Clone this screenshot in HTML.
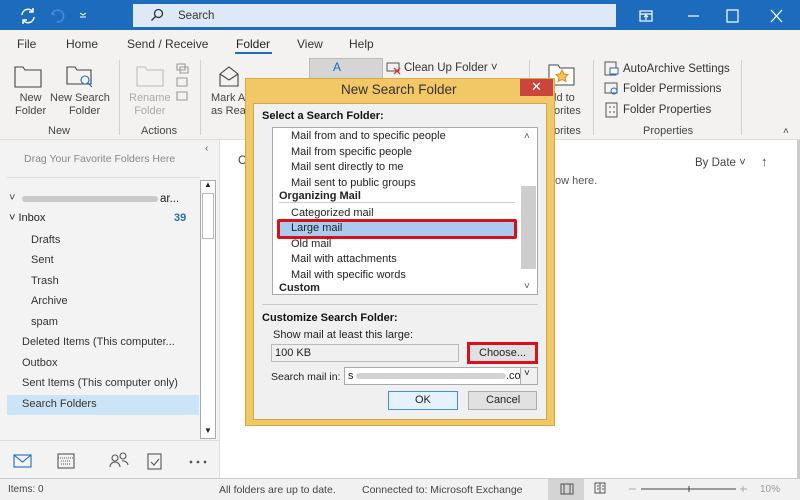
<!DOCTYPE html>
<html><head><meta charset="utf-8"><style>
*{margin:0;padding:0;box-sizing:border-box}
body{width:800px;height:500px;overflow:hidden;position:relative;font-family:"Liberation Sans","DejaVu Sans",sans-serif;font-size:11px;color:#222;background:#fff}
.a{position:absolute}
.t{position:absolute;white-space:nowrap}
</style></head><body>
<!-- title bar -->
<div class="a" style="left:0;top:0;width:800px;height:30px;background:#1c6bbd"></div>
<div class="a" style="left:133px;top:4px;width:483px;height:23px;background:#dde9f6"></div>
<svg class="a" style="left:18px;top:6px" width="20" height="20" viewBox="0 0 20 20" fill="none" stroke="#fff" stroke-width="1.5"><path d="M4 9a6 6 0 0 1 11-3M16 11a6 6 0 0 1-11 3"/><path d="M15 2v4h-4M5 18v-4h4"/></svg>
<svg class="a" style="left:50px;top:7px" width="16" height="16" viewBox="0 0 16 16" fill="none" stroke="#4f8fd8" stroke-width="1.4"><path d="M4 4l-2 3 3 1M2 7a6 6 0 1 1 5 8"/></svg>
<svg class="a" style="left:78px;top:10px" width="10" height="10" fill="none" stroke="#fff"><path d="M2 3l3 2 3-2M2 7h6"/></svg>
<svg class="a" style="left:150px;top:8px" width="14" height="14" viewBox="0 0 14 14" fill="none" stroke="#333" stroke-width="1.3"><circle cx="8.5" cy="5.5" r="4"/><path d="M5.5 8.5L1.5 12.5"/></svg>
<div class="t" style="left:178px;top:10px;font-size:11.5px;color:#333">Search</div>
<svg class="a" style="left:638px;top:8px" width="150" height="16" viewBox="0 0 150 16" fill="none" stroke="#fff" stroke-width="1.2"><rect x="2" y="3" width="12" height="10"/><path d="M2 6h12M8 12V7M6 9l2-2 2 2"/><path d="M50 8h11"/><rect x="89" y="2" width="11" height="12"/><path d="M133 2l11 12M144 2l-11 12"/></svg>
<!-- tabs -->
<div class="a" style="left:0;top:30px;width:800px;height:110px;background:#f3f2f1"></div>
<div class="t" style="left:17px;top:37px;font-size:12px;color:#333">File</div>
<div class="t" style="left:66px;top:37px;font-size:12px;color:#333">Home</div>
<div class="t" style="left:127px;top:37px;font-size:12px;color:#333">Send / Receive</div>
<div class="t" style="left:236px;top:37px;font-size:12px;color:#222">Folder</div>
<div class="a" style="left:235px;top:52px;width:37px;height:2px;background:#1c6bbd"></div>
<div class="t" style="left:297px;top:37px;font-size:12px;color:#333">View</div>
<div class="t" style="left:349px;top:37px;font-size:12px;color:#333">Help</div>
<!-- ribbon -->
<svg class="a" style="left:12px;top:62px" width="230" height="40" viewBox="0 0 230 40" fill="none" stroke="#444" stroke-width="1.1"><path d="M3 5h8l2 3h16v17H3z"/><path d="M55 5h8l2 3h14v14H55z"/><circle cx="73" cy="18" r="4" stroke="#1c6bbd"/><path d="M76 21l4 4" stroke="#1c6bbd"/><path d="M125 5h8l2 3h16v16h-26z" stroke="#bbb"/><path d="M165 2h8v6h-8zM168 5h8v6h-8zM165 16h10v8h-10zM165 30h10v8h-10z" stroke="#999"/><path d="M208 12l9-7 9 7v12h-18z"/><path d="M208 12l9 6 9-6"/></svg>
<div class="t" style="left:15px;top:92px;text-align:center;line-height:13px;color:#444;font-size:11px">New<br>Folder</div>
<div class="t" style="left:50px;top:92px;text-align:center;line-height:13px;color:#444;font-size:11px">New Search<br>&nbsp;&nbsp;&nbsp;Folder</div>
<div class="t" style="left:129px;top:92px;text-align:center;line-height:13px;color:#aaa;font-size:11px">Rename<br>Folder</div>
<div class="t" style="left:211px;top:92px;line-height:13px;color:#444;font-size:11px">Mark A<br>as Rea</div>
<div class="t" style="left:48px;top:125px;color:#444;font-size:11px">New</div>
<div class="t" style="left:141px;top:125px;color:#444;font-size:11px">Actions</div>
<div class="a" style="left:119px;top:60px;width:1px;height:75px;background:#d0d0d0"></div>
<div class="a" style="left:200px;top:60px;width:1px;height:75px;background:#d0d0d0"></div>
<div class="a" style="left:309px;top:58px;width:74px;height:22px;background:#d5d5d5;border:1px solid #bbb"></div>
<div class="t" style="left:333px;top:60px;color:#1c6bbd;font-size:12px">A</div>
<svg class="a" style="left:386px;top:61px" width="16" height="14"><rect x="1" y="2" width="12" height="8" fill="none" stroke="#555"/><path d="M8 7l6 6M14 7l-6 6" stroke="#d33" stroke-width="1.3"/></svg>
<div class="t" style="left:404px;top:62px;color:#333;font-size:11.5px">Clean Up Folder ˅</div>
<div class="a" style="left:529px;top:60px;width:1px;height:75px;background:#d0d0d0"></div>
<svg class="a" style="left:548px;top:64px" width="28" height="22"><path d="M1 1h9l2 3h14v17H1z" fill="#fff" stroke="#444"/><path d="M14 6l2 4 4 .5-3 3 1 4-4-2-4 2 1-4-3-3 4-.5z" fill="#f7c45b" stroke="#e08b1e"/></svg>
<div class="t" style="left:554px;top:92px;line-height:13px;color:#444;font-size:11px">ld to<br>orites</div>
<div class="t" style="left:554px;top:125px;color:#444;font-size:11px">orites</div>
<div class="a" style="left:593px;top:60px;width:1px;height:75px;background:#d0d0d0"></div>
<svg class="a" style="left:604px;top:61px" width="16" height="60" fill="none" stroke="#555"><rect x="1" y="1" width="11" height="13"/><rect x="6" y="7" width="8" height="6" stroke="#1c6bbd" fill="#fff"/><rect x="1" y="22" width="12" height="10"/><circle cx="10" cy="30" r="3" stroke="#1c6bbd"/><rect x="2" y="42" width="11" height="14"/><path d="M5 46h2M5 51h2M9 46h2M9 51h2"/></svg>
<div class="t" style="left:623px;top:63px;color:#333;font-size:11.5px">AutoArchive Settings</div>
<div class="t" style="left:623px;top:83px;color:#333;font-size:11.5px">Folder Permissions</div>
<div class="t" style="left:623px;top:104px;color:#333;font-size:11.5px">Folder Properties</div>
<div class="t" style="left:643px;top:125px;color:#444;font-size:11px">Properties</div>
<div class="a" style="left:741px;top:60px;width:1px;height:75px;background:#d0d0d0"></div>
<div class="t" style="left:783px;top:126px;color:#444;font-size:10px">˄</div>
<div class="a" style="left:0;top:139px;width:800px;height:1px;background:#dadada"></div>
<!-- left pane -->
<div class="a" style="left:0;top:140px;width:220px;height:338px;background:#f3f3f3;border-right:1px solid #ddd"></div>
<div class="t" style="left:205px;top:143px;color:#555;font-size:10px">‹</div>
<div class="t" style="left:24px;top:153px;color:#888;font-size:10.5px">Drag Your Favorite Folders Here</div>
<div class="a" style="left:7px;top:177px;width:193px;height:1px;background:#ddd"></div>
<div class="a" style="left:200px;top:180px;width:16px;height:259px;background:#fff;border:1px solid #aaa"></div>
<div class="a" style="left:202px;top:193px;width:12px;height:46px;background:#fff;border:1px solid #bbb"></div>
<div class="t" style="left:204px;top:180px;font-size:8px">▲</div>
<div class="t" style="left:204px;top:426px;font-size:8px">▼</div>
<div class="t" style="left:9px;top:192px;color:#444">˅</div>
<div class="a" style="left:22px;top:196px;width:136px;height:6px;background:#c9c9c9;border-radius:3px"></div>
<div class="t" style="left:160px;top:193px;font-size:11.5px">ar...</div>
<div class="t" style="left:9px;top:212px;font-size:11px">˅ Inbox</div>
<div class="t" style="left:174px;top:212px;font-size:11px;color:#2a6cb0;font-weight:bold">39</div>
<div class="t" style="left:31px;top:234px;font-size:11px;color:#333">Drafts</div>
<div class="t" style="left:31px;top:254px;font-size:11px;color:#333">Sent</div>
<div class="t" style="left:31px;top:275px;font-size:11px;color:#333">Trash</div>
<div class="t" style="left:31px;top:295px;font-size:11px;color:#333">Archive</div>
<div class="t" style="left:31px;top:316px;font-size:11px;color:#333">spam</div>
<div class="t" style="left:22px;top:336px;font-size:11px;color:#333">Deleted Items (This computer...</div>
<div class="t" style="left:22px;top:357px;font-size:11px;color:#333">Outbox</div>
<div class="t" style="left:22px;top:377px;font-size:11px;color:#333">Sent Items (This computer only)</div>
<div class="a" style="left:7px;top:395px;width:192px;height:20px;background:#cce4f7"></div>
<div class="t" style="left:22px;top:398px;font-size:11px;color:#333">Search Folders</div>
<div class="a" style="left:0;top:440px;width:219px;height:1px;background:#ddd"></div>
<svg class="a" style="left:12px;top:450px" width="200" height="22" fill="none" stroke="#555" stroke-width="1.1"><rect x="2" y="5" width="17" height="12" stroke="#1c6bbd"/><path d="M2 5l8.5 7 8.5-7" stroke="#1c6bbd"/><rect x="46" y="4" width="16" height="14"/><path d="M46 8h16M49 11h10M49 14h10" stroke-dasharray="1 1"/><circle cx="103" cy="8" r="3"/><path d="M98 17a5 5 0 0 1 10 0"/><circle cx="111" cy="6" r="3"/><path d="M110 11a5 5 0 0 1 6 4"/><rect x="136" y="4" width="13" height="15"/><path d="M139 12l3 3 5-6"/><circle cx="179" cy="12" r=".8" fill="#555"/><circle cx="186" cy="12" r=".8" fill="#555"/><circle cx="193" cy="12" r=".8" fill="#555"/></svg>
<!-- content -->
<div class="t" style="left:238px;top:153px;color:#444;font-size:12px">C</div>
<div class="t" style="left:695px;top:157px;color:#444;font-size:11.5px">By Date ˅</div>
<div class="t" style="left:761px;top:154px;color:#444;font-size:13px">↑</div>
<div class="t" style="left:555px;top:175px;color:#555;font-size:11px">ow here.</div>
<div class="a" style="left:797px;top:140px;width:3px;height:340px;background:#ccc"></div>
<!-- status bar -->
<div class="a" style="left:0;top:478px;width:800px;height:22px;background:#f1f1f1;border-top:1px solid #ccc"></div>
<div class="t" style="left:8px;top:484px;color:#444;font-size:10px">Items: 0</div>
<div class="t" style="left:219px;top:484px;color:#444;font-size:10.5px">All folders are up to date.</div>
<div class="t" style="left:362px;top:484px;color:#444;font-size:10.5px">Connected to: Microsoft Exchange</div>
<div class="a" style="left:548px;top:479px;width:36px;height:21px;background:#d4d4d4"></div>
<svg class="a" style="left:558px;top:482px" width="200" height="14" fill="none" stroke="#555"><rect x="3" y="2" width="12" height="10"/><path d="M6 2v10M12 2v10"/><rect x="37" y="1" width="10" height="10"/><path d="M42 1v10M39 4h2M39 7h2M44 4h2M44 7h2"/><path d="M71 7h7M182 7h7M185 4v6" stroke="#aaa"/><path d="M83 7h95M131 4v6" stroke="#444"/></svg>
<div class="t" style="left:760px;top:484px;color:#999;font-size:10px">10%</div>
<!-- dialog -->
<div class="a" style="left:245px;top:78px;width:310px;height:348px;background:#f1c865;border:1px solid #d8a93f"></div>
<div class="t" style="left:341px;top:82px;color:#333;font-size:13.5px">New Search Folder</div>
<div class="a" style="left:520px;top:79px;width:33px;height:17px;background:#c9453e"></div>
<div class="t" style="left:531px;top:79px;color:#fff;font-size:13px">✕</div>
<div class="a" style="left:253px;top:103px;width:294px;height:317px;background:#f0f0f0;border:1px solid #c9a94f"></div>
<div class="t" style="left:262px;top:110px;font-weight:bold;font-size:11px;color:#111">Select a Search Folder:</div>
<div class="a" style="left:272px;top:127px;width:266px;height:168px;background:#fff;border:1px solid #aaa"></div>
<div class="a" style="left:521px;top:186px;width:15px;height:83px;background:#cdcdcd"></div>
<div class="t" style="left:524px;top:131px;font-size:10px;color:#555">˄</div>
<div class="t" style="left:524px;top:281px;font-size:10px;color:#555">˅</div>
<div class="t" style="left:291px;top:130px;font-size:11px">Mail from and to specific people</div>
<div class="t" style="left:291px;top:146px;font-size:11px">Mail from specific people</div>
<div class="t" style="left:291px;top:161px;font-size:11px">Mail sent directly to me</div>
<div class="t" style="left:291px;top:177px;font-size:11px">Mail sent to public groups</div>
<div class="t" style="left:279px;top:190px;font-size:11px;font-weight:bold">Organizing Mail</div>
<div class="a" style="left:279px;top:202px;width:236px;height:1px;background:#ccc"></div>
<div class="t" style="left:291px;top:207px;font-size:11px">Categorized mail</div>
<div class="a" style="left:277px;top:219px;width:240px;height:20px;background:#aacbee;border:3px solid #d9101a;border-radius:2px"></div>
<div class="t" style="left:291px;top:222px;font-size:11px">Large mail</div>
<div class="t" style="left:291px;top:238px;font-size:11px">Old mail</div>
<div class="t" style="left:291px;top:253px;font-size:11px">Mail with attachments</div>
<div class="t" style="left:291px;top:269px;font-size:11px">Mail with specific words</div>
<div class="t" style="left:279px;top:282px;font-size:11px;font-weight:bold">Custom</div>
<div class="a" style="left:262px;top:304px;width:276px;height:1px;background:#c8c8c8"></div>
<div class="t" style="left:262px;top:312px;font-weight:bold;font-size:11px;color:#111">Customize Search Folder:</div>
<div class="t" style="left:273px;top:329px;font-size:11px">Show mail at least this large:</div>
<div class="a" style="left:271px;top:344px;width:188px;height:18px;background:#f0f0f0;border:1px solid #bbb"></div>
<div class="t" style="left:275px;top:347px;font-size:11px">100 KB</div>
<div class="a" style="left:467px;top:342px;width:71px;height:22px;background:#e1e1e1;border:3px solid #d9101a"></div>
<div class="t" style="left:479px;top:347px;font-size:11px">Choose...</div>
<div class="t" style="left:271px;top:371px;font-size:10.5px">Search mail in:</div>
<div class="a" style="left:344px;top:367px;width:194px;height:18px;background:#fff;border:1px solid #aaa"></div>
<div class="t" style="left:348px;top:370px;font-size:11px">s</div>
<div class="a" style="left:356px;top:373px;width:150px;height:6px;background:#d3d3d3;border-radius:3px"></div>
<div class="t" style="left:506px;top:370px;font-size:11px">.coı</div>
<div class="a" style="left:520px;top:368px;width:17px;height:16px;background:#f0f0f0;border-left:1px solid #aaa"></div>
<div class="t" style="left:524px;top:368px;font-size:10px">˅</div>
<div class="a" style="left:388px;top:391px;width:70px;height:19px;background:#e5f1fb;border:1px solid #3c8fd8"></div>
<div class="t" style="left:415px;top:394px;font-size:11px">OK</div>
<div class="a" style="left:468px;top:391px;width:69px;height:19px;background:#e1e1e1;border:1px solid #adadad"></div>
<div class="t" style="left:486px;top:394px;font-size:11px">Cancel</div>
</body></html>
